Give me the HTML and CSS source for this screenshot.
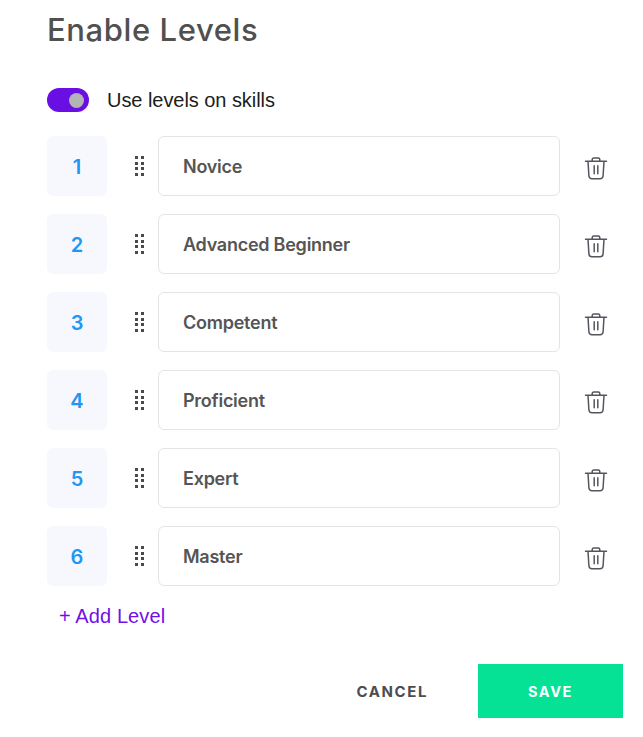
FILE: index.html
```html
<!DOCTYPE html>
<html lang="en">
<head>
<meta charset="utf-8">
<title>Enable Levels</title>
<link rel="stylesheet" href="styles.css">
</head>
<body>
<svg class="defs" width="0" height="0" aria-hidden="true">
  <symbol id="trash" viewBox="0 0 24 24">
    <path d="M1.500 5.200h21M8.200 5V3.600c0-.9.7-1.600 1.600-1.600h4.400c.9 0 1.600.7 1.600 1.600V5M4 5.200l.9 14.600c.1 1.800 1.400 3 3.100 3h8c1.700 0 3-1.200 3.100-3L20 5.200M10.200 9.800v8M13.800 9.800v8" fill="none" stroke="currentColor" stroke-width="1.500" stroke-linecap="round" stroke-linejoin="round"/>
  </symbol>
</svg>
<main class="panel">
  <h1 class="title">Enable Levels</h1>
  <div class="toggle-row">
    <span class="toggle"><span class="knob"></span></span>
    <span class="toggle-label">Use levels on skills</span>
  </div>
  <div class="levels">
    <div class="level"><div class="num">1</div><div class="grip"><i></i><i></i><i></i><i></i><i></i><i></i><i></i><i></i></div><div class="field">Novice</div><svg class="trash"><use href="#trash"/></svg></div>
    <div class="level"><div class="num">2</div><div class="grip"><i></i><i></i><i></i><i></i><i></i><i></i><i></i><i></i></div><div class="field">Advanced Beginner</div><svg class="trash"><use href="#trash"/></svg></div>
    <div class="level"><div class="num">3</div><div class="grip"><i></i><i></i><i></i><i></i><i></i><i></i><i></i><i></i></div><div class="field">Competent</div><svg class="trash"><use href="#trash"/></svg></div>
    <div class="level"><div class="num">4</div><div class="grip"><i></i><i></i><i></i><i></i><i></i><i></i><i></i><i></i></div><div class="field">Proficient</div><svg class="trash"><use href="#trash"/></svg></div>
    <div class="level"><div class="num">5</div><div class="grip"><i></i><i></i><i></i><i></i><i></i><i></i><i></i><i></i></div><div class="field">Expert</div><svg class="trash"><use href="#trash"/></svg></div>
    <div class="level"><div class="num">6</div><div class="grip"><i></i><i></i><i></i><i></i><i></i><i></i><i></i><i></i></div><div class="field">Master</div><svg class="trash"><use href="#trash"/></svg></div>
  </div>
  <div class="add">+ Add Level</div>
  <div class="actions">
    <div class="cancel">CANCEL</div>
    <div class="save">SAVE</div>
  </div>
</main>
</body>
</html>
```
FILE: styles.css
```css
* { box-sizing: border-box; }
html, body { margin: 0; height: 100%; background: #fff; overflow: hidden; }
body { font-family: Inter, "Liberation Sans", sans-serif; color: #4d4d4d; }
.defs { position: absolute; }
.panel { padding: 10px 20px 0 47px; }
.title { margin: 0; height: 40px; font: 500 31px/40px Inter, "Open Sans", sans-serif; letter-spacing: 0.600px; color: #505050; }
.toggle-row { display: flex; align-items: center; margin-top: 38px; height: 24px; gap: 18px; }
.toggle { display: flex; align-items: center; justify-content: flex-end; width: 42px; height: 24px; padding-right: 5px; border-radius: 12px; background: #6a0fe3; }
.knob { width: 15px; height: 15px; border-radius: 50%; background: #b4b4b4; }
.toggle-label { font-family: "Liberation Sans", Inter, sans-serif; font-size: 20px; line-height: 24px; color: #1c1c1c; letter-spacing: -0.050px; }
.levels { display: flex; flex-direction: column; gap: 18px; margin-top: 24px; }
.level { display: flex; align-items: center; height: 60px; }
.num { display: flex; align-items: center; justify-content: center; width: 60px; height: 60px; padding-top: 1px; border-radius: 6px; background: #f6f8fe; color: #2196f3; font-size: 20px; font-weight: 600; }
.grip { display: grid; grid-template-columns: 3px 3px; column-gap: 3px; row-gap: 2.600px; width: 9px; margin: 0 14px 0 28px; }
.grip i { width: 3px; height: 3px; background: #4a4a4a; }
.field { display: flex; align-items: center; width: 402px; height: 60px; padding-left: 24px; border: 1px solid #e4e4e4; border-radius: 6px; font-size: 18px; font-weight: 600; color: #555; letter-spacing: -0.250px; }
.trash { width: 24px; height: 24px; margin: 3px 0 0 24px; color: #55555d; }
.add { margin: 18px 0 0 12px; height: 24px; font-family: "Liberation Sans", Inter, sans-serif; font-size: 20px; line-height: 24px; color: #7210e5; letter-spacing: 0.100px; }
.actions { display: flex; align-items: center; justify-content: flex-end; margin-top: 36px; }
.cancel { margin-right: 50px; font-size: 15px; font-weight: 700; letter-spacing: 1.600px; color: #4d4d4d; }
.save { display: flex; align-items: center; justify-content: center; width: 145px; height: 54px; background: #05e295; color: #fff; font-size: 14.500px; font-weight: 700; letter-spacing: 1.600px; }
```
